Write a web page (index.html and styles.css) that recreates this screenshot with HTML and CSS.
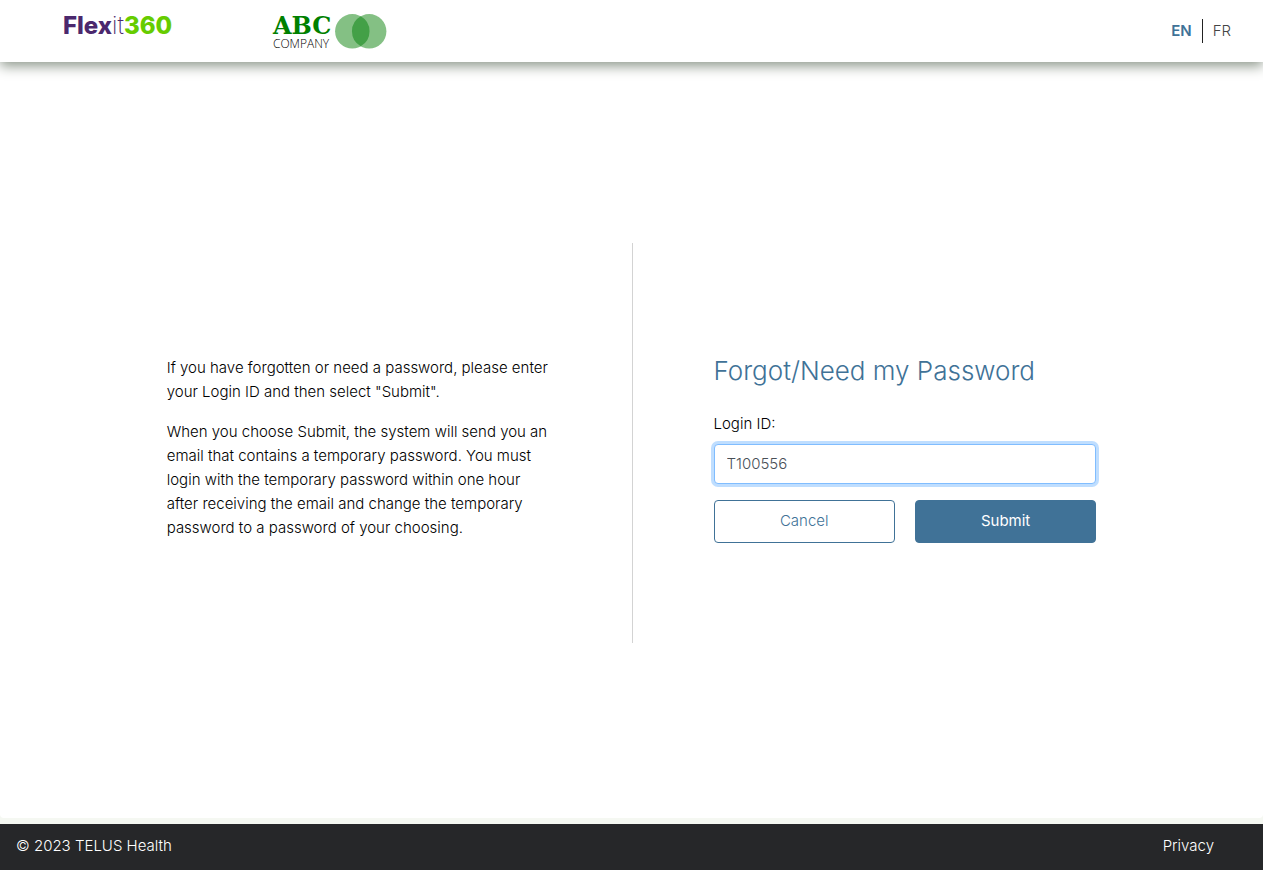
FILE: index.html
```html
<!DOCTYPE html>
<html lang="en">
<head>
<meta charset="utf-8">
<meta name="viewport" content="width=device-width, initial-scale=1">
<title>Forgot/Need my Password</title>
<link rel="stylesheet" href="styles.css">
</head>
<body>
<header class="header">
  <div class="brand"><span class="brand-flex">Flex</span><span class="brand-it">it</span><span class="brand-360">360</span></div>
  <div class="company">
    <div class="company-name">
      <span class="company-abc">ABC</span>
      <span class="company-sub">COMPANY</span>
    </div>
    <svg class="company-mark" viewBox="0 0 52 35" aria-hidden="true">
      <circle cx="17.3" cy="17.3" r="17.2" fill="#84c084"/>
      <circle cx="34.2" cy="17.3" r="17.2" fill="#84c084"/>
      <path d="M25.75 2.3a17.2 17.2 0 0 1 0 30a17.2 17.2 0 0 1 0-30z" fill="#43a047"/>
    </svg>
  </div>
  <nav class="lang" aria-label="Language">
    <a class="lang-link lang-current" href="#">EN</a>
    <a class="lang-link" href="#">FR</a>
  </nav>
</header>
<main class="main">
  <div class="panels">
    <section class="panel info">
      <p class="info-text">If you have forgotten or need a password, please enter your Login ID and then select "Submit".</p>
      <p class="info-text">When you choose Submit, the system will send you an email that contains a temporary password. You must login with the temporary password within one hour after receiving the email and change the temporary password to a password of your choosing.</p>
    </section>
    <form class="panel form">
      <h1 class="title">Forgot/Need my Password</h1>
      <label class="label" for="login">Login ID:</label>
      <input class="field" id="login" type="text" value="T100556">
      <div class="actions">
        <button class="button" type="button">Cancel</button>
        <button class="button button-primary" type="submit">Submit</button>
      </div>
    </form>
  </div>
</main>
<footer class="footer">
  <span>© 2023 TELUS Health</span>
  <a class="footer-link" href="#">Privacy</a>
</footer>
</body>
</html>
```
FILE: styles.css
```css
* {
  box-sizing: border-box;
}

body {
  margin: 0;
  min-height: 100vh;
  display: flex;
  flex-direction: column;
  background: #f5f8f2;
  color: #000;
  font: 300 15px/24px Inter, "Liberation Sans", sans-serif;
}

a {
  color: inherit;
  text-decoration: none;
}

.header {
  position: relative;
  display: flex;
  align-items: flex-start;
  height: 62px;
  padding: 0 32px 0 63px;
  background: #fff;
  box-shadow: 0 4px 12px #8c968a;
}

.brand {
  width: 210px;
  padding-top: 13px;
  font-size: 24px;
  line-height: 26px;
}

.brand-flex {
  color: #4b286d;
  font-weight: 800;
}

.brand-it {
  color: #4b286d;
  font-weight: 200;
}

.brand-360 {
  color: #66cc00;
  font-weight: 800;
}

.company {
  display: flex;
  gap: 4px;
  padding-top: 14px;
}

.company-name {
  display: flex;
  flex-direction: column;
  width: 58px;
}

.company-abc {
  color: #008000;
  font: 700 24px/24px "DejaVu Serif", serif;
}

.company-sub {
  font: 300 12px/12px "Open Sans", sans-serif;
}

.company-mark {
  width: 52px;
  height: 35px;
}

.lang {
  display: flex;
  margin-left: auto;
  padding-top: 19px;
}

.lang-link {
  padding-left: 10px;
  color: #444;
}

.lang-current {
  padding: 0 10px 0 0;
  border-right: 1px solid #222;
  color: #407297;
  font-weight: 600;
}

.main {
  flex: 1;
  display: flex;
  align-items: center;
  margin-bottom: 6px;
  padding: 6px 0 0;
  border-radius: 0 0 4px 4px;
  background: #fff;
}

.panels {
  flex: 1;
  display: grid;
  grid-template-columns: 1fr 1fr;
  min-height: 400px;
  padding: 0 13.2%;
}

.panel {
  padding-top: 113px;
}

.info {
  padding-right: 82px;
}

.info-text {
  margin: 0 0 16px;
}

.form {
  padding-top: 111px;
  padding-left: 81px;
  border-left: 1px solid #d3d3d3;
}

.title {
  margin: 0 0 24px;
  color: #407297;
  font-size: 26px;
  font-weight: 300;
  line-height: 34px;
}

.label {
  display: block;
  margin-bottom: 8px;
}

.field {
  display: block;
  width: 100%;
  height: 40px;
  padding: 0 12px 2px;
  border: 1px solid #80bdff;
  border-radius: 4px;
  outline: 0;
  box-shadow: 0 0 0 3px #bfdeff;
  color: #495057;
  font: inherit;
}

.actions {
  display: grid;
  grid-template-columns: 1fr 1fr;
  gap: 20px;
  margin-top: 16px;
}

.button {
  height: 43px;
  padding: 0 12px 2px;
  border: 1px solid #407297;
  border-radius: 4px;
  background: #fff;
  color: #407297;
  font: inherit;
}

.button-primary {
  background: #407297;
  color: #fff;
  font-weight: 400;
}

.footer {
  display: flex;
  align-items: center;
  justify-content: space-between;
  height: 46px;
  padding: 0 49px 2px 16px;
  background: #262729;
  color: #fff;
}
```
